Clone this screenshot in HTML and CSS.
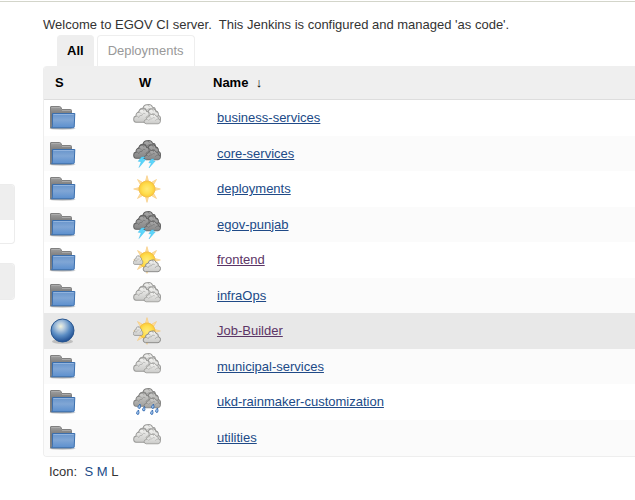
FILE: index.html
```html
<!DOCTYPE html>
<html lang="en">
<head>
<meta charset="utf-8">
<title>EGOV CI server</title>
<link rel="stylesheet" href="styles.css">
</head>
<body>
<svg class="sprite" aria-hidden="true">
  <defs>
    <linearGradient id="gBack" x1="0" y1="0" x2="0" y2="1"><stop offset="0" stop-color="#a0a0a0"/><stop offset=".4" stop-color="#777"/><stop offset="1" stop-color="#888"/></linearGradient>
    <linearGradient id="gFront" x1="0" y1="0" x2="0" y2="1"><stop offset="0" stop-color="#6794cb"/><stop offset=".45" stop-color="#80a6d5"/><stop offset="1" stop-color="#5b8fce"/></linearGradient>
    <linearGradient id="gLight" x1="0" y1="0" x2="0" y2="1"><stop offset="0" stop-color="#f4f4f2"/><stop offset="1" stop-color="#cacac8"/></linearGradient>
    <linearGradient id="gDark" x1="0" y1="0" x2="0" y2="1"><stop offset="0" stop-color="#aaa"/><stop offset="1" stop-color="#858585"/></linearGradient>
    <linearGradient id="gRain" x1="0" y1="0" x2="0" y2="1"><stop offset="0" stop-color="#d0d0ce"/><stop offset="1" stop-color="#a0a09e"/></linearGradient>
    <radialGradient id="gSun"><stop offset="0" stop-color="#ffea78"/><stop offset=".6" stop-color="#ffdf50"/><stop offset="1" stop-color="#fbca38"/></radialGradient>
    <radialGradient id="gBall" cx=".42" cy=".32" r=".68"><stop offset="0" stop-color="#f2f3dc"/><stop offset=".25" stop-color="#b7ccdf"/><stop offset=".6" stop-color="#5b8dc4"/><stop offset="1" stop-color="#204f93"/></radialGradient>
    <symbol id="folder" viewBox="0 0 28 28">
      <ellipse cx="13.500" cy="24.500" rx="13" ry="1.500" fill="#000" opacity=".16"/>
      <path d="M1.500 24V3q0-.5.5-.5h8.500q1 0 1.500 1l.8 2h8.700q1 0 1 1V24z" fill="url(#gBack)" stroke="#808080"/>
      <path d="M2.500 3.500h8.500M13 6.500h8.500" stroke="#b0b0b0" stroke-width=".8"/>
      <path d="M3.500 9.500h22.300l-.6 13.500q-.1.800-1 .8H2.600q.7-.5.800-2z" fill="url(#gFront)" stroke="#3b6fae"/>
      <path d="M4.400 10.500h20.300" stroke="#a3c0e5" stroke-width=".7"/>
    </symbol>
    <g id="puff">
      <path d="M4.500 20Q1 19.500 1 16q0-3.500 3.500-4Q4 7.500 8.500 7q1-5 5.500-4.500Q19 1 20.500 6q4-.3 3.500 5 3.500.5 3.300 4.500T23.500 20z" stroke-width="1.400"/>
      <path d="M4.500 12q3-.5 4 2 1-4 5-3 1-4 5-2M24 11.500q-4-.5-5 3M8.500 7q3 0 4 2M14 2.500q2.500 1 2.500 3" fill="none" stroke-width="1.200" opacity=".6"/>
    </g>
    <g id="bank">
      <use href="#puff" transform="translate(3.500 -1) scale(.78 .7)"/>
      <use href="#puff" transform="translate(9.500 3) scale(.66 .78)"/>
      <use href="#puff" transform="translate(0 3) scale(.67 .76)"/>
      <use href="#puff" transform="translate(10.500 9) scale(.62 .54)"/>
    </g>
    <symbol id="cloud" viewBox="0 0 28 28"><use href="#bank" fill="url(#gLight)" stroke="#999997"/></symbol>
    <symbol id="storm" viewBox="0 0 28 28">
      <use href="#bank" fill="url(#gDark)" stroke="#606060"/>
      <path d="M8.500 17 5.200 21.300l3 .4L6 27.500l6.800-8-3-.3 2-2.200zM18.500 19l-2.700 3.700 2.600.3-2.400 5 6.200-7-2.500-.3 1.500-1.700z" fill="#5bd6fb" stroke="#35b9e8" stroke-width=".4"/>
    </symbol>
    <symbol id="rain" viewBox="0 0 28 28">
      <use href="#bank" fill="url(#gRain)" stroke="#828280"/>
      <g fill="#a8caef" stroke="#3068b0" stroke-width=".9">
        <path id="drop" d="M7 16q-3 3.200-1.500 4.200 2 .9 2-1.500z"/>
        <use href="#drop" x="4.500" y="2.500"/><use href="#drop" x="-1.500" y="6"/><use href="#drop" x="13.500" y="0"/><use href="#drop" x="17.500" y="4"/><use href="#drop" x="12.500" y="6"/>
      </g>
    </symbol>
    <g id="rays">
      <g fill="#ffdf9c" stroke="#f5c878" stroke-width=".6">
        <path id="ray" d="M12.500 6 14 .6 15.500 6z"/>
        <use href="#ray" transform="rotate(45 14 14)"/><use href="#ray" transform="rotate(90 14 14)"/><use href="#ray" transform="rotate(135 14 14)"/><use href="#ray" transform="rotate(180 14 14)"/><use href="#ray" transform="rotate(225 14 14)"/><use href="#ray" transform="rotate(270 14 14)"/><use href="#ray" transform="rotate(315 14 14)"/>
      </g>
      <circle cx="14" cy="14" r="8" fill="url(#gSun)" stroke="#f2bd3c" stroke-width=".8"/>
    </g>
    <symbol id="sun" viewBox="0 0 28 28"><use href="#rays"/></symbol>
    <symbol id="partly" viewBox="0 0 28 28">
      <use href="#rays"/>
      <g fill="url(#gLight)" stroke="#858583">
        <use href="#puff" transform="translate(0 8.500) scale(.36 .5)"/>
        <use href="#puff" transform="translate(9.500 12.500) scale(.66 .66)"/>
      </g>
    </symbol>
    <symbol id="ball" viewBox="0 0 28 28">
      <ellipse cx="13.500" cy="24.500" rx="10.500" ry="2.300" fill="#000" opacity=".18"/>
      <circle cx="13.500" cy="13.500" r="11.500" fill="url(#gBall)" stroke="#29568f"/>
    </symbol>
  </defs>
</svg>
<div class="page">
  <aside class="side">
    <section class="pane"><div class="pane-head"></div><div class="pane-body"></div></section>
    <section class="pane"><div class="pane-head"></div></section>
  </aside>
  <main class="main">
    <p class="welcome">Welcome to EGOV CI server.&nbsp; This Jenkins is configured and managed 'as code'.</p>
    <nav class="tabs">
      <a class="tab active" href="#all">All</a>
      <a class="tab" href="#deployments">Deployments</a>
    </nav>
    <div class="frame">
      <table class="jobs">
        <thead><tr><th class="status">S</th><th class="weather">W</th><th>Name&nbsp; <span class="arrow">↓</span></th></tr></thead>
        <tbody>
          <tr><td><svg class="icon"><use href="#folder"/></svg></td><td><svg class="icon"><use href="#cloud"/></svg></td><td><a href="#j1">business-services</a></td></tr>
          <tr><td><svg class="icon"><use href="#folder"/></svg></td><td><svg class="icon"><use href="#storm"/></svg></td><td><a href="#j2">core-services</a></td></tr>
          <tr><td><svg class="icon"><use href="#folder"/></svg></td><td><svg class="icon"><use href="#sun"/></svg></td><td><a href="#j3">deployments</a></td></tr>
          <tr><td><svg class="icon"><use href="#folder"/></svg></td><td><svg class="icon"><use href="#storm"/></svg></td><td><a href="#j4">egov-punjab</a></td></tr>
          <tr><td><svg class="icon"><use href="#folder"/></svg></td><td><svg class="icon"><use href="#partly"/></svg></td><td><a class="visited" href="#j5">frontend</a></td></tr>
          <tr><td><svg class="icon"><use href="#folder"/></svg></td><td><svg class="icon"><use href="#cloud"/></svg></td><td><a href="#j6">infraOps</a></td></tr>
          <tr class="current"><td><svg class="icon"><use href="#ball"/></svg></td><td><svg class="icon"><use href="#partly"/></svg></td><td><a class="visited" href="#j7">Job-Builder</a></td></tr>
          <tr><td><svg class="icon"><use href="#folder"/></svg></td><td><svg class="icon"><use href="#cloud"/></svg></td><td><a href="#j8">municipal-services</a></td></tr>
          <tr><td><svg class="icon"><use href="#folder"/></svg></td><td><svg class="icon"><use href="#rain"/></svg></td><td><a href="#j9">ukd-rainmaker-customization</a></td></tr>
          <tr><td><svg class="icon"><use href="#folder"/></svg></td><td><svg class="icon"><use href="#cloud"/></svg></td><td><a href="#j10">utilities</a></td></tr>
        </tbody>
      </table>
    </div>
    <div class="sizes">Icon:&nbsp; <a href="#s">S</a> <a href="#m">M</a> <span>L</span></div>
  </main>
</div>
</body>
</html>
```
FILE: styles.css
```css
* { box-sizing: border-box; }
body {
  margin: 0;
  background: #fff;
  color: #333;
  font: 13px/20px "Liberation Sans", Arial, sans-serif;
}
.sprite { position: absolute; width: 0; height: 0; }
.page { display: flex; border-top: 1px solid #fff; }
.page::before { content: ""; position: absolute; top: 1px; left: 0; right: 0; height: 1px; background: #d3d5ca; }
.side {
  width: 15px;
  flex: none;
  display: flex;
  flex-direction: column;
  gap: 19px;
  padding-top: 183px;
}
.pane {
  border: 1px solid #ececec;
  border-left: 0;
  border-radius: 0 4px 4px 0;
  overflow: hidden;
}
.pane-head { height: 35px; background: #eee; }
.pane-body { height: 23px; }
.main { flex: 1; min-width: 0; padding: 14px 0 0 28px; }
.welcome { margin: 0; }
.tabs { display: flex; gap: 3px; padding-left: 14px; }
.tab {
  padding: 5px 10px;
  border: 1px solid #eee;
  border-bottom: 0;
  border-radius: 4px 4px 0 0;
  color: #999;
  text-decoration: none;
}
.tab.active {
  border-width: 1px 0 0;
  background: #eee;
  color: #000;
  font-weight: bold;
}
.frame {
  border: 1px solid #eee;
  border-right: 0;
  border-top: 0;
  border-radius: 4px 0 0 4px;
  overflow: hidden;
}
.jobs { width: 100%; border-collapse: separate; border-spacing: 0; table-layout: fixed; }
.jobs th {
  height: 34px;
  padding: 0 11px;
  background: #efefef;
  border-bottom: 1px solid #ddd;
  color: #000;
  text-align: left;
}
.jobs .status { width: 84px; }
.jobs .weather { width: 74px; }
.arrow { font-weight: bold; }
.jobs tbody tr { height: 36px; }
.jobs tbody tr:nth-child(even) { height: 35px; background: #fbfbfb; }
.jobs tbody tr:last-child { height: 36px; }
.jobs tbody tr.current { background: #e8e8e8; }
.jobs td { padding: 0 5px; }
.jobs td:last-child { padding-left: 15px; }
.jobs a { color: #204a87; }
.jobs a.visited { color: #5c3566; }
.icon { display: block; width: 28px; height: 28px; }
.sizes { padding: 5px 6px; }
.sizes a { color: #204a87; text-decoration: none; }
```
